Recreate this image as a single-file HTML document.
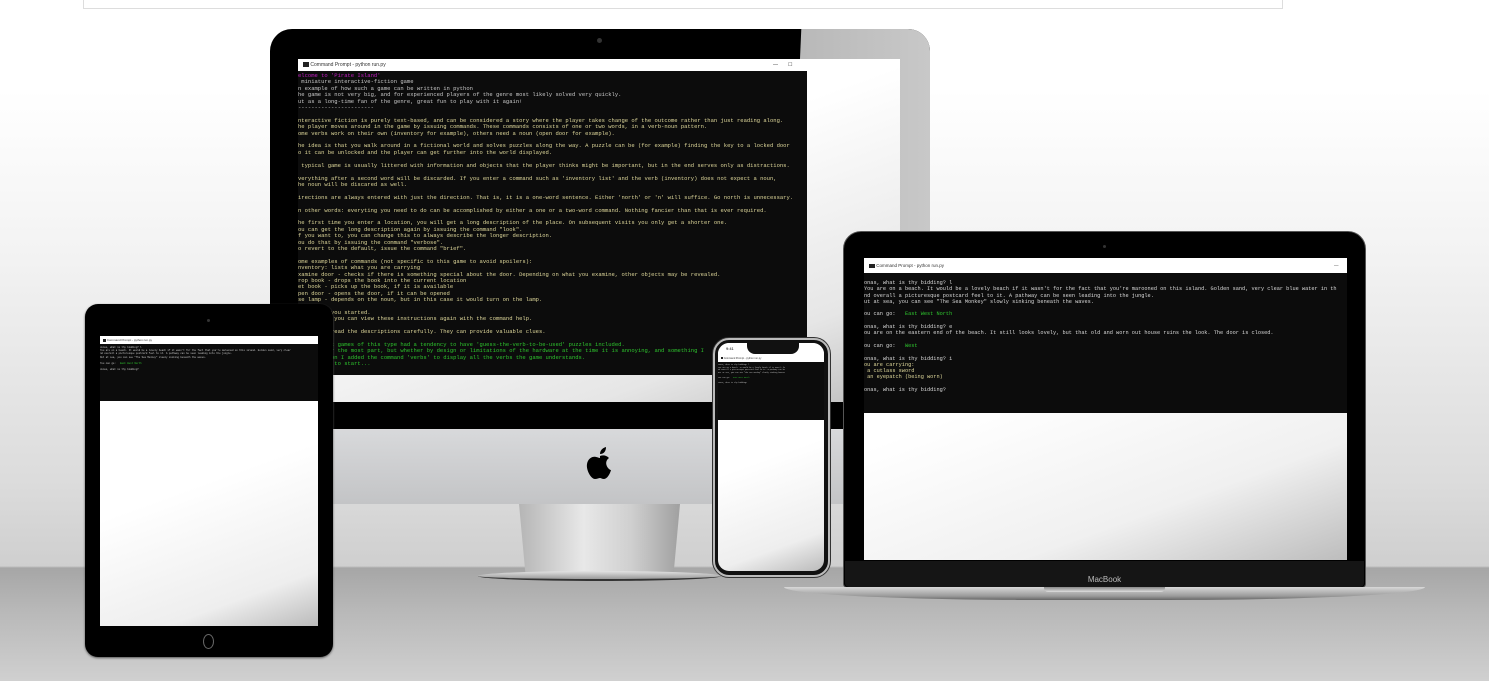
<!DOCTYPE html>
<html><head><meta charset="utf-8"><style>
*{margin:0;padding:0;box-sizing:border-box}
body{width:1489px;height:681px;overflow:hidden;position:relative;font-family:"Liberation Sans",sans-serif;
background:linear-gradient(#fff 0px,#fff 90px,#f3f3f3 250px,#dcdcdc 480px,#cfcfcf 566px,#a6a6a6 568px,#b8b8b8 610px,#d0d0d0 681px);}
.a{position:absolute}
.term{position:absolute;background:#0c0c0c;overflow:hidden;font-family:"Liberation Mono",monospace;white-space:pre;color:#c8c8c8}
.tb{background:#fff;color:#333;font-family:"Liberation Sans",sans-serif;white-space:nowrap;overflow:hidden;position:relative}
.tb i{display:inline-block;background:#222;vertical-align:middle}
.y{color:#ded79a}.g{color:#2ec42e}.m{color:#c21ec2}.w{color:#d8d8d8}
</style></head><body>
<div class="a" style="left:83px;top:-2px;width:1200px;height:11px;border:1px solid #ddd;background:#fff"></div>

<!-- iMac -->
<div class="a" style="left:270px;top:29px;width:660px;height:376px;background:#000;border-radius:22px 22px 0 0"></div>
<div class="a" style="left:270px;top:29px;width:660px;height:376px;border-radius:22px 22px 0 0;background:linear-gradient(90deg,#7a7a7a,#c8c8c8);clip-path:polygon(80.5% 0,100% 0,100% 100%,78% 100%)"></div>
<div class="a" style="left:597px;top:38px;width:5px;height:5px;border-radius:50%;background:#333"></div>
<div class="a" style="left:298px;top:59px;width:602px;height:344px;background:linear-gradient(160deg,#fff 40%,#e6e6e6 80%,#bdbdbd)"></div>
<div class="a" style="left:270px;top:402px;width:660px;height:27px;background:#000"></div>
<div class="a" style="left:270px;top:429px;width:660px;height:75px;background:linear-gradient(#d8d9db,#c3c4c6)"></div>
<svg class="a" style="left:583px;top:444px" width="34" height="40" viewBox="0 0 34 40"><path d="M17 12c3-1 6-1 9 2-3 2-4 6-1 10 1 1 2 2 3 2-1 4-4 9-7 9-2 0-3-1-4-1s-3 1-5 1c-4 0-9-9-8-15 1-6 6-8 9-7 1 0 3 1 4 1z M17 10c0-3 2-6 6-7 0 4-2 7-6 7z" fill="#000"/></svg>
<div class="a" style="left:519px;top:504px;width:161px;height:70px;background:linear-gradient(90deg,#b5b5b5,#e8e8e8 40%,#cfcfcf 70%,#a0a0a0);clip-path:polygon(0 0,100% 0,96% 100%,4% 100%)"></div>
<div class="a" style="left:478px;top:571px;width:243px;height:10px;border-radius:50%;background:linear-gradient(#e4e4e4,#9a9a9a);border-bottom:2px solid #333"></div>

<div class="term" style="left:298px;top:59px;width:509px;height:316px;font-size:5.5px;line-height:6.4px"><div class="tb" style="height:12px;font-size:5px;line-height:12px;padding-left:5px"><i style="width:6px;height:5px"></i> Command Prompt - python  run.py<span style="position:absolute;left:475px">—</span><span style="position:absolute;left:490px">☐</span></div><div style="padding-top:2px"><span class="m">elcome to 'Pirate Island'</span>
 miniature interactive-fiction game
n example of how such a game can be written in python
he game is not very big, and for experienced players of the genre most likely solved very quickly.
ut as a long-time fan of the genre, great fun to play with it again!
-----------------------
<span class="y">
nteractive fiction is purely text-based, and can be considered a story where the player takes change of the outcome rather than just reading along.
he player moves around in the game by issuing commands. These commands consists of one or two words, in a verb-noun pattern.
ome verbs work on their own (inventory for example), others need a noun (open door for example).

he idea is that you walk around in a fictional world and solves puzzles along the way. A puzzle can be (for example) finding the key to a locked door
o it can be unlocked and the player can get further into the world displayed.

 typical game is usually littered with information and objects that the player thinks might be important, but in the end serves only as distractions.

verything after a second word will be discarded. If you enter a command such as 'inventory list' and the verb (inventory) does not expect a noun,
he noun will be discared as well.

irections are always entered with just the direction. That is, it is a one-word sentence. Either 'north' or 'n' will suffice. Go north is unnecessary.

n other words: everyting you need to do can be accomplished by either a one or a two-word command. Nothing fancier than that is ever required.

he first time you enter a location, you will get a long description of the place. On subsequent visits you only get a shorter one.
ou can get the long description again by issuing the command "look".
f you want to, you can change this to always describe the longer description.
ou do that by issuing the command "verbose".
o revert to the default, issue the command "brief".

ome examples of commands (not specific to this game to avoid spoilers):
nventory: lists what you are carrying
xamine door - checks if there is something special about the door. Depending on what you examine, other objects may be revealed.
rop book - drops the book into the current location
et book - picks up the book, if it is available
pen door - opens the door, if it can be opened
se lamp - depends on the noun, but in this case it would turn on the lamp.

hould get you started.
f need to, you can view these instructions again with the command help.

inal tip: read the descriptions carefully. They can provide valuable clues.
</span><span class="g">
he earliest games of this type had a tendency to have 'guess-the-verb-to-be-used' puzzles included.
 design for the most part, but whether by design or limitations of the hardware at the time it is annoying, and something I
 that reason I added the command 'verbs' to display all the verbs the game understands.
ress enter to start...</span></div></div>

<!-- Tablet -->
<div class="a" style="left:85px;top:304px;width:248px;height:353px;background:#000;border-radius:13px;box-shadow:0 1px 2px #555"></div>
<div class="a" style="left:207px;top:319px;width:3px;height:3px;border-radius:50%;background:#333"></div>
<div class="a" style="left:100px;top:336px;width:218px;height:290px;background:linear-gradient(160deg,#fff 50%,#eee 85%,#bbb)"></div>
<div class="term" style="left:100px;top:336px;width:218px;height:65px;font-size:2.4px;line-height:3.2px"><div class="tb" style="height:8px;font-size:3px;line-height:8px;padding-left:3px"><i style="width:3px;height:3px"></i> Command Prompt - python  run.py</div><div style="padding-top:2px">Jonas, what is thy bidding? l
You are on a beach. It would be a lovely beach if it wasn't for the fact that you're marooned on this island. Golden sand, very clear
nd overall a picturesque postcard feel to it. A pathway can be seen leading into the jungle.
Out at sea, you can see "The Sea Monkey" slowly sinking beneath the waves.

You can go:   <span class="g">East West North</span>

Jonas, what is thy bidding?</div></div>
<div class="a" style="left:203px;top:634px;width:11px;height:15px;border:1px solid #666;border-radius:50%"></div>

<!-- Phone -->
<div class="a" style="left:713px;top:338px;width:117px;height:239px;background:#111;border-radius:16px;border:2px solid #bbb;box-shadow:0 0 0 1px #333"></div>
<div class="a" style="left:718px;top:343px;width:106px;height:228px;background:linear-gradient(160deg,#fff 50%,#eee 85%,#bbb);border-radius:11px;overflow:hidden">
<div style="height:12px;background:#fff;font-size:4px;line-height:12px;padding-left:8px;color:#000">9:41</div>
<div class="term" style="left:0;top:12px;width:106px;height:65px;font-size:1.8px;line-height:2.6px"><div class="tb" style="height:7px;font-size:2.5px;line-height:7px;padding-left:3px"><i style="width:2px;height:2px"></i> Command Prompt - python  run.py</div><div style="padding-top:2px">Jonas, what is thy bidding? l
You are on a beach. It would be a lovely beach if it wasn't fo
nd overall a picturesque postcard feel to it. A pathway can be
Out at sea, you can see "The Sea Monkey" slowly sinking beneat

You can go:   <span class="g">East West North</span>

Jonas, what is thy bidding?</div></div></div>
<div class="a" style="left:747px;top:342px;width:52px;height:12px;background:#111;border-radius:0 0 8px 8px"></div>

<!-- MacBook -->
<div class="a" style="left:843px;top:231px;width:523px;height:357px;background:#000;border-radius:18px 18px 4px 4px;border:1px solid #555"></div>
<div class="a" style="left:1103px;top:245px;width:3px;height:3px;border-radius:50%;background:#333"></div>
<div class="a" style="left:864px;top:258px;width:483px;height:302px;background:linear-gradient(160deg,#fff 40%,#f0f0f0 75%,#bdbdbd)"></div>
<div class="term" style="left:864px;top:258px;width:483px;height:155px;font-size:5.25px;line-height:6.3px"><div class="tb" style="height:15px;font-size:4.5px;line-height:15px;padding-left:5px"><i style="width:6px;height:4px"></i> Command Prompt - python  run.py<span style="position:absolute;left:470px">—</span></div><div style="padding-top:7px" class="w">onas, what is thy bidding? l
You are on a beach. It would be a lovely beach if it wasn't for the fact that you're marooned on this island. Golden sand, very clear blue water in th
nd overall a picturesque postcard feel to it. A pathway can be seen leading into the jungle.
ut at sea, you can see "The Sea Monkey" slowly sinking beneath the waves.

ou can go:   <span class="g">East West North</span>

onas, what is thy bidding? e
ou are on the eastern end of the beach. It still looks lovely, but that old and worn out house ruins the look. The door is closed.

ou can go:   <span class="g">West</span>

onas, what is thy bidding? i
<span class="y">ou are carrying:
 a cutlass sword
 an eyepatch (being worn)</span>

onas, what is thy bidding?</div></div>
<div class="a" style="left:845px;top:561px;width:519px;height:26px;background:#151515;border-radius:0 0 4px 4px;color:#bbb;font-size:8px;text-align:center;line-height:38px">MacBook</div>
<div class="a" style="left:784px;top:587px;width:641px;height:13px;background:linear-gradient(#d8d8d8,#9a9a9a 70%,#666);border-radius:0 0 40% 40%/0 0 100% 100%"></div>
<div class="a" style="left:1044px;top:587px;width:121px;height:5px;background:linear-gradient(#888,#ddd);border-radius:0 0 4px 4px"></div>
</body></html>
